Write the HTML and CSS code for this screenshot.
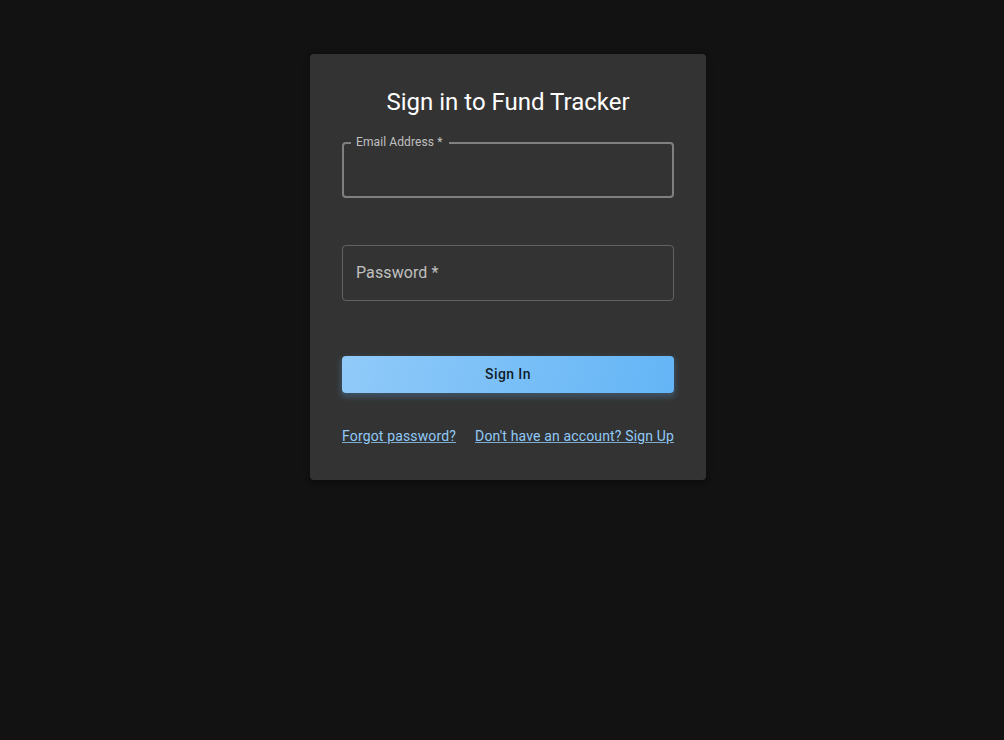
FILE: index.html
```html
<!DOCTYPE html>
<html lang="en">
<head>
<meta charset="utf-8">
<title>Sign in to Fund Tracker</title>
<link rel="stylesheet" href="styles.css">
</head>
<body>
<main class="page">
  <div class="card">
    <h1 class="title">Sign in to Fund Tracker</h1>
    <form class="form">
      <div class="field field-active">
        <fieldset class="outline outline-notched"><legend class="notch"><span>Email Address *</span></legend></fieldset>
        <label class="label label-small">Email Address *</label>
        <input class="input" type="email">
      </div>
      <div class="field">
        <fieldset class="outline"></fieldset>
        <label class="label">Password *</label>
        <input class="input" type="password">
      </div>
      <button class="btn" type="button">Sign In</button>
      <div class="links">
        <a href="#" class="link">Forgot password?</a>
        <a href="#" class="link">Don't have an account? Sign Up</a>
      </div>
    </form>
  </div>
</main>
</body>
</html>
```
FILE: styles.css
```css
* { box-sizing: border-box; }
html, body { margin: 0; padding: 0; height: 100%; }
body {
  background: #121212;
  font-family: Roboto, "Liberation Sans", Arial, sans-serif;
  color: #fff;
}
.page {
  display: flex;
  justify-content: center;
  padding-top: 54px;
  padding-left: 12px;
}
.card {
  width: 396px;
  background: #333333;
  border-radius: 4px;
  padding: 32px 32px 34px;
  box-shadow: 0 3px 3px -2px rgba(0,0,0,0.2), 0 3px 4px 0 rgba(0,0,0,0.14), 0 1px 8px 0 rgba(0,0,0,0.12);
}
.title {
  margin: 0;
  font-size: 24px;
  font-weight: 400;
  line-height: 32px;
  text-align: center;
  color: #fff;
}
.form { display: flex; flex-direction: column; margin-top: 24px; }
.field {
  position: relative;
  height: 56px;
  margin-bottom: 47px;
}
.outline {
  position: absolute;
  inset: 0;
  margin: 0;
  padding: 0 8px;
  border: 1px solid rgba(255,255,255,0.23);
  border-radius: 4px;
  pointer-events: none;
}
.outline-notched { top: -5px; }
.field-active .outline { border: 2px solid #808080; padding: 0 7px; }
.notch {
  padding: 0 8px 0 5px;
  font-size: 12px;
  line-height: 11px;
  height: 11px;
  visibility: hidden;
}
.label {
  position: absolute;
  left: 14px;
  top: 16px;
  font-size: 16px;
  line-height: 23px;
  color: rgba(255,255,255,0.7);
  letter-spacing: 0.1px;
}
.label-small {
  top: -8px;
  font-size: 12px;
  line-height: 16px;
  left: 14px;
}
.input {
  width: 100%;
  height: 56px;
  background: transparent;
  border: 0;
  outline: none;
  padding: 16px 14px;
  color: #fff;
  font: inherit;
}
.btn {
  margin-top: 8px;
  height: 37px;
  padding: 0 0 2px;
  border: 0;
  border-radius: 4px;
  background: linear-gradient(100deg, #90caf9 0%, #64b5f6 100%);
  color: rgba(0,0,0,0.87);
  font-family: inherit;
  font-size: 14px;
  font-weight: 500;
  letter-spacing: 0.4px;
  box-shadow: 0 3px 5px 2px rgba(100,181,246,0.22);
  cursor: pointer;
}
.links {
  display: flex;
  justify-content: space-between;
  margin-top: 33px;
  line-height: 20px;
}
.link {
  color: #90caf9;
  font-size: 14px;
  letter-spacing: 0.15px;
  text-decoration: underline;
  text-decoration-color: rgba(144,202,249,0.8);
}
```
